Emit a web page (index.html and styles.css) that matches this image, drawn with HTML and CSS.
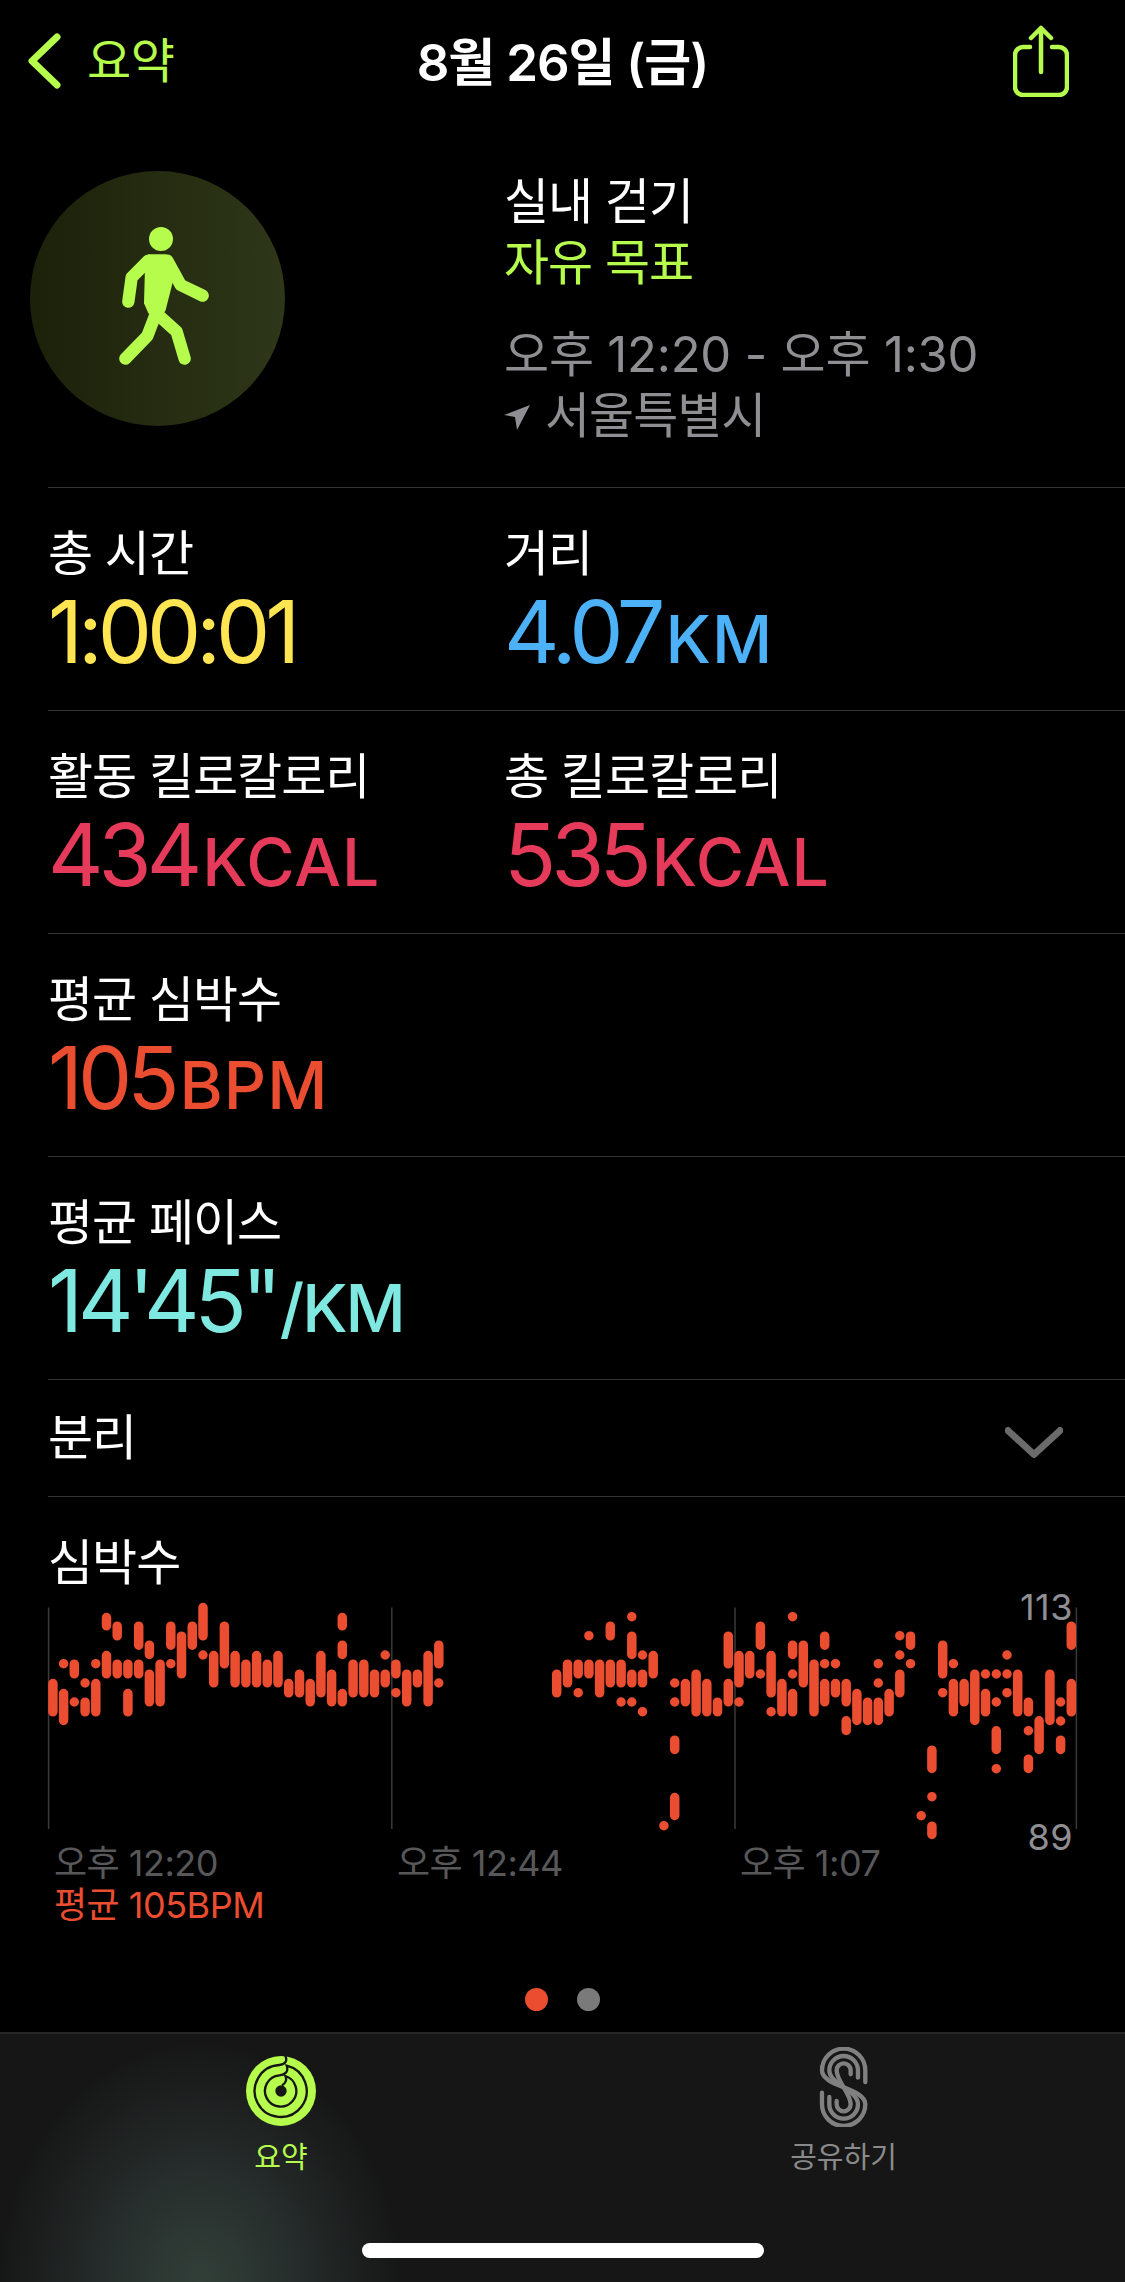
FILE: index.html
```html
<!DOCTYPE html>
<html lang="ko">
<head>
<meta charset="utf-8">
<title>8월 26일 (금)</title>
<link rel="stylesheet" href="styles.css">
</head>
<body>
<div class="screen">
  <header class="nav">
    <div class="nav-back">
      <svg class="chevron" viewBox="0 0 34 56"><path d="M30 4 L5 28 L30 52"/></svg>
      <span class="nav-back-text">요약</span>
    </div>
    <h1 class="nav-title">8월 26일 (금)</h1>
    <div class="nav-share">
      <svg class="share" viewBox="0 0 56 72"><path d="M17 22 H10 a8 8 0 0 0 -8 8 V62 a8 8 0 0 0 8 8 H46 a8 8 0 0 0 8 -8 V30 a8 8 0 0 0 -8 -8 H39 M28 47 V3 M18 13 L28 3 L38 13"/></svg>
    </div>
  </header>

  <section class="summary">
    <div class="badge">
      <svg class="walker" viewBox="30 33 765 765">
        <circle class="walker-head" cx="423" cy="237" r="36"/>
        <path class="walker-fill" d="M385 283 H438 L470 320 L437 450 L420 480 L385 460 L372 430 L375 320 Z"/>
        <path class="walker-limb" d="M385 302 L335 352 L325 425 M442 302 L482 375 L548 407 M408 460 L382 528 L316 596 M420 470 L470 515 L494 596"/>
      </svg>
    </div>
    <div class="summary-info">
      <div class="summary-name">실내 걷기</div>
      <div class="summary-goal">자유 목표</div>
      <div class="summary-time">오후 12:20 - 오후 1:30</div>
      <div class="summary-place">
        <svg class="loc" viewBox="0 0 26 26"><path d="M26 0 L13 25 L11 12 L0 10 Z"/></svg>
        <span>서울특별시</span>
      </div>
    </div>
  </section>

  <section class="row">
    <div class="metric"><div class="label">총 시간</div><div class="value yellow">1:00:01</div></div>
    <div class="metric"><div class="label">거리</div><div class="value blue">4.07<span class="unit">KM</span></div></div>
  </section>
  <section class="row">
    <div class="metric"><div class="label">활동 킬로칼로리</div><div class="value pink">434<span class="unit">KCAL</span></div></div>
    <div class="metric"><div class="label">총 킬로칼로리</div><div class="value pink">535<span class="unit">KCAL</span></div></div>
  </section>
  <section class="row">
    <div class="metric"><div class="label">평균 심박수</div><div class="value orange">105<span class="unit">BPM</span></div></div>
  </section>
  <section class="row">
    <div class="metric"><div class="label">평균 페이스</div><div class="value cyan">14'45"<span class="unit unit-pace">/KM</span></div></div>
  </section>

  <section class="split">
    <span class="label">분리</span>
    <svg class="split-chevron" viewBox="0 0 60 32"><path d="M3 3 L30 28 L57 3"/></svg>
  </section>

  <section class="chart">
    <div class="label chart-title">심박수</div>
    <div class="plot">
      <svg class="plot-svg" viewBox="0 80 1125 250">
        <path class="grid" d="M48.6 88.5 V310 M391.8 88.5 V310 M735 88.5 V310 M1076.4 88.5 V310"/>
        <path class="bars" d="M52.9 164.5 V192.8
M63.6 144.7 h0 M63.6 174.5 V201.5
M74.3 145.2 V154.8 M74.3 183 h0
M85.1 164 h0 M85.1 183.2 V192.8
M95.8 144.7 h0 M95.8 164.5 V192.8
M106.5 98.5 V106.8 M106.5 136.5 V154.8
M117.2 107.2 V116.8 M117.2 145.2 V154.8
M127.9 145.2 V154.8 M127.9 174.5 V192.8
M138.7 107.2 V126.2 M138.7 145.2 V154.8
M149.4 126.2 V135.5 M149.4 155.2 V182.8
M160.1 145.2 V182.8
M170.8 107.2 V126.2 M170.8 144.7 h0
M181.5 117.2 V154.8
M192.3 107.2 V126.2
M203 88.5 V116.8 M203 136 h0
M213.7 136.5 V163.8
M224.4 107.2 V144.8
M235.1 136.5 V163.8
M245.9 145.2 V163.8
M256.6 136.5 V163.8
M267.3 145.2 V163.8
M278 136.5 V163.8
M288.7 164.5 V173.8
M299.5 155.2 V173.8
M310.2 164.5 V182.8
M320.9 136.5 V173.8
M331.6 155.2 V182.8
M342.3 98.5 V106.8 M342.3 126.2 V135.5 M342.3 174.5 V182.8
M353.1 145.2 V173.8
M363.8 145.2 V173.8
M374.5 155.2 V173.8
M385.2 136 h0 M385.2 155.2 V163.8
M395.9 145.2 V154.8 M395.9 173.7 h0
M406.7 155.2 V182.8
M417.4 155.2 V163.8
M428.1 136.5 V182.8
M438.8 126.2 V144.8 M438.8 164 h0
M556.7 155.2 V173.8
M567.5 145.2 V163.8
M578.2 145.2 V154.8 M578.2 173.7 h0
M588.9 116.7 h0 M588.9 145.2 V154.8
M599.6 145.2 V173.8
M610.3 107.2 V116.8 M610.3 145.2 V163.8
M621.1 145.2 V163.8 M621.1 183 h0
M631.8 97.7 h0 M631.8 117.2 V135.5 M631.8 155.2 V163.8 M631.8 183 h0
M642.5 136 h0 M642.5 155.2 V163.8 M642.5 192.7 h0
M653.2 136.5 V154.8
M663.9 306.7 h0
M674.7 164 h0 M674.7 183 h0 M674.7 221.2 V230.5 M674.7 278.5 V296.5
M685.4 164.5 V182.8
M696.1 155.2 V192.8
M706.8 164.5 V192.8
M717.5 183.2 V192.8
M728.3 117.2 V144.8 M728.3 164.5 V182.8
M739 136.5 V163.8 M739 183 h0
M749.7 136.5 V154.8
M760.4 107.2 V126.2 M760.4 155 h0
M771.1 136.5 V173.8 M771.1 192.7 h0
M781.9 164.5 V192.8
M792.6 97.7 h0 M792.6 126.2 V135.5 M792.6 155 h0 M792.6 174.5 V192.8
M803.3 126.2 V163.8
M814 145.2 V192.8
M824.7 117.2 V126.2 M824.7 144.7 h0 M824.7 164.5 V182.8
M835.5 144.7 h0 M835.5 164.5 V173.8
M846.2 164.5 V182.8 M846.2 201.8 V211.5
M856.9 174.5 V201.5
M867.6 183.2 V201.5
M878.3 144.7 h0 M878.3 164 h0 M878.3 183.2 V201.5
M889.1 174.5 V192.8
M899.8 116.7 h0 M899.8 136 h0 M899.8 155.2 V173.8
M910.5 117.2 V126.2 M910.5 144.7 h0
M921.2 296.7 h0
M931.9 231.2 V249.5 M931.9 277.7 h0 M931.9 307.2 V315.5
M942.7 126.2 V154.8 M942.7 173.7 h0
M953.4 144.7 h0 M953.4 164.5 V192.8
M964.1 164.5 V182.8
M974.8 155.2 V201.5
M985.5 155 h0 M985.5 174.5 V192.8
M996.3 155 h0 M996.3 183 h0 M996.3 211.8 V230.5 M996.3 249.7 h0
M1007 136 h0 M1007 155 h0 M1007 173.7 h0
M1017.7 155.2 V192.8
M1028.4 183.2 V192.8 M1028.4 211.7 h0 M1028.4 240.2 V249.5
M1039.1 201.8 V230.5
M1049.9 155.2 V201.5
M1060.6 183 h0 M1060.6 202 h0 M1060.6 221.2 V230.5
M1071.3 107.2 V126.2 M1071.3 164.5 V192.8"/>
      </svg>
      <span class="plot-max">113</span>
      <span class="plot-min">89</span>
    </div>
    <div class="axis">
      <span class="axis-tick">오후 12:20</span>
      <span class="axis-tick">오후 12:44</span>
      <span class="axis-tick">오후 1:07</span>
    </div>
    <div class="avg">평균 105BPM</div>
  </section>

  <div class="pager">
    <span class="dot dot-on"></span>
    <span class="dot"></span>
  </div>

  <footer class="tabs">
    <div class="tab tab-on">
      <svg class="tab-rings" viewBox="140 75 210 210">
        <circle class="rings-disc" cx="245" cy="180" r="105"/>
        <path class="rings-line" d="M258 74 C265 90 258 101 240 102 A78 78 0 1 0 262 104 C268 120 260 131 240 133 A47 47 0 1 0 258 135 C264 146 258 158 248 163"/>
        <circle class="rings-hole" cx="245" cy="180" r="17"/>
      </svg>
      <span class="tab-label">요약</span>
    </div>
    <div class="tab">
      <svg class="tab-share" viewBox="140 60 160 240">
        <path d="M285 165 V130 A65 65 0 0 0 155 130 C155 180 285 182 285 232 A65 65 0 0 1 155 232 V197"/>
        <path d="M263 152 V130 A43 43 0 0 0 177 130 C177 172 263 190 263 232 A43 43 0 0 1 177 232 V210"/>
        <path d="M241 142 V130 A21 21 0 0 0 199 130 C199 165 241 197 241 232 A21 21 0 0 1 199 232 V222"/>
      </svg>
      <span class="tab-label">공유하기</span>
    </div>
    <div class="home-bar"></div>
  </footer>
</div>
</body>
</html>
```

FILE: styles.css
```css
* { box-sizing: border-box; margin: 0; padding: 0; }
html, body { background: #000; }
body {
  width: 1125px;
  height: 2282px;
  overflow: hidden;
  font-family: Inter, "Noto Sans CJK KR", sans-serif;
  color: #fff;
}
.screen { display: flex; flex-direction: column; width: 1125px; height: 2282px; }

/* nav */
.nav {
  display: grid;
  grid-template-columns: 1fr auto 1fr;
  align-items: center;
  height: 120px;
  padding: 2px 27px 0 27px;
  flex: none;
}
.nav-back { display: flex; align-items: center; gap: 26px; color: #b5fc4d; }
.chevron { width: 34px; height: 56px; fill: none; stroke: #b5fc4d; stroke-width: 7; stroke-linecap: round; stroke-linejoin: round; }
.nav-back-text { font-size: 48px; line-height: 56px; letter-spacing: -0.5px; }
.nav-title { font-size: 51px; font-weight: 600; line-height: 60px; letter-spacing: -1px; white-space: nowrap; margin-top: 4px; }
.nav-share { display: flex; justify-content: flex-end; padding-right: 29px; }
.share { width: 56px; height: 72px; fill: none; stroke: #b5fc4d; stroke-width: 4.5; stroke-linecap: round; stroke-linejoin: round; }

/* summary */
.summary { display: flex; height: 367px; padding: 51px 0 0 30px; flex: none; }
.badge {
  width: 255px;
  height: 255px;
  border-radius: 50%;
  background: linear-gradient(90deg, #1c2109, #2e3719);
  flex: none;
}
.walker { display: block; width: 255px; height: 255px; }
.walker-head, .walker-fill { fill: #b5fc4d; }
.walker-limb { fill: none; stroke: #b5fc4d; stroke-width: 37; stroke-linecap: round; stroke-linejoin: round; }
.summary-info { margin-left: 219px; font-size: 49px; line-height: 61px; letter-spacing: -1px; }
.summary-goal { color: #b5fc4d; }
.summary-time { margin-top: 31px; color: #8e8e93; letter-spacing: -0.2px; }
.summary-place { display: flex; align-items: center; gap: 15px; color: #8e8e93; }
.loc { width: 26px; height: 26px; fill: #8e8e93; margin-top: 4px; }

/* rows */
.row {
  display: grid;
  grid-template-columns: 456px 1fr;
  height: 223px;
  margin-left: 48px;
  padding-top: 36px;
  border-top: 1px solid #333;
  flex: none;
}
.label { font-size: 49px; line-height: 60px; letter-spacing: -1px; color: #fff; white-space: nowrap; }
.value { font-size: 86px; line-height: 96px; letter-spacing: -5px; white-space: nowrap; }
.unit { font-size: 66px; font-weight: 500; letter-spacing: 1px; margin-left: 5px; }
.unit-pace { letter-spacing: -2px; margin-left: 3px; }
.yellow { color: #ffe552; }
.blue { color: #4cb1f7; }
.pink { color: #e53a5a; }
.orange { color: #ea4d30; }
.cyan { color: #7fe8e0; }

/* split */
.split {
  display: flex;
  align-items: center;
  justify-content: space-between;
  height: 118px;
  margin-left: 48px;
  padding-right: 62px;
  border-top: 1px solid #333;
  border-bottom: 1px solid #333;
  flex: none;
}
.split-chevron { width: 58px; height: 32px; margin-top: 10px; fill: none; stroke: #6b6b6b; stroke-width: 7; stroke-linecap: round; stroke-linejoin: round; }

/* chart */
.chart { position: relative; height: 455px; flex: none; }
.chart-title { margin: 36px 0 0 48px; }
.plot { position: relative; height: 250px; margin-top: 6px; }
.plot-svg { display: block; width: 1125px; height: 250px; }
.grid { fill: none; stroke: #3a3a3c; stroke-width: 1.5; }
.bars { fill: none; stroke: #ea4d30; stroke-width: 9.5; stroke-linecap: round; }
.plot-max, .plot-min { position: absolute; right: 52px; font-size: 36px; line-height: 40px; letter-spacing: 0.5px; color: #8e8e93; }
.plot-max { top: -12px; }
.plot-min { top: 218px; }
.axis { position: absolute; top: 346px; left: 0; display: flex; }
.axis-tick { font-size: 36px; line-height: 40px; color: #58585a; width: 343px; padding-left: 54px; white-space: nowrap; flex: none; letter-spacing: -0.5px; }
.avg { position: absolute; top: 387px; left: 54px; font-size: 36px; line-height: 42px; letter-spacing: -0.5px; color: #ea4d30; white-space: nowrap; }

/* pager */
.pager { display: flex; justify-content: center; align-items: center; gap: 29px; height: 80px; padding-top: 14px; flex: none; }
.dot { width: 23px; height: 23px; border-radius: 50%; background: #7a7a7a; }
.dot-on { background: #ea4d30; }

/* tabs */
.tabs {
  position: relative;
  display: grid;
  grid-template-columns: 562px 563px;
  flex: 1;
  border-top: 2px solid #262626;
  background:
    radial-gradient(ellipse 200px 240px at 200px 100%, #323f39 0%, rgba(46, 56, 54, .7) 45%, rgba(22, 22, 22, 0) 100%),
    #161616;
}
.tab { position: relative; display: flex; flex-direction: column; align-items: center; color: #8a8a8a; }
.tab-on { color: #b5fc4d; }
.tab-rings { position: absolute; top: 22px; left: 246px; width: 70px; height: 70px; }
.rings-disc { fill: #b5fc4d; }
.rings-line { fill: none; stroke: #161616; stroke-width: 7; }
.rings-hole { fill: #161616; }
.tab-share { position: absolute; top: 13px; left: 255px; width: 53.3px; height: 80px; fill: none; stroke: #808080; stroke-width: 13; stroke-linecap: round; }
.tab-label { position: absolute; top: 104px; font-size: 29px; line-height: 40px; white-space: nowrap; }
.home-bar { position: absolute; left: 362px; top: 209px; width: 402px; height: 15px; border-radius: 8px; background: #fff; }
```
